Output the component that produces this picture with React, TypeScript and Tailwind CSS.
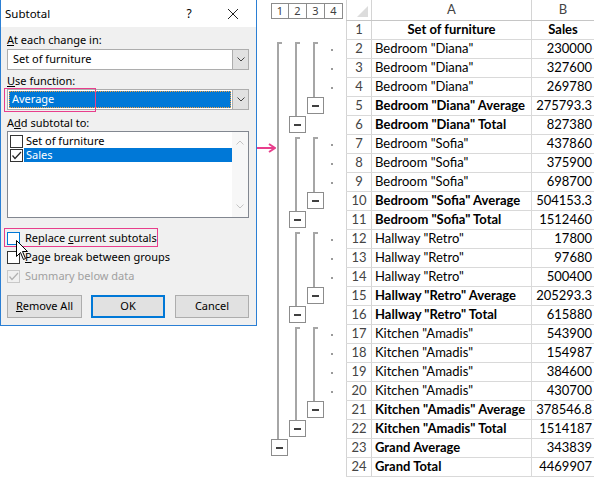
import React from "react";

const rows: { a: string; b: string; bold?: boolean; head?: boolean }[] = [
  { a: "Set of furniture", b: "Sales", head: true },
  { a: 'Bedroom "Diana"', b: "230000" },
  { a: 'Bedroom "Diana"', b: "327600" },
  { a: 'Bedroom "Diana"', b: "269780" },
  { a: 'Bedroom "Diana" Average', b: "275793.3", bold: true },
  { a: 'Bedroom "Diana" Total', b: "827380", bold: true },
  { a: 'Bedroom "Sofia"', b: "437860" },
  { a: 'Bedroom "Sofia"', b: "375900" },
  { a: 'Bedroom "Sofia"', b: "698700" },
  { a: 'Bedroom "Sofia" Average', b: "504153.3", bold: true },
  { a: 'Bedroom "Sofia" Total', b: "1512460", bold: true },
  { a: 'Hallway "Retro"', b: "17800" },
  { a: 'Hallway "Retro"', b: "97680" },
  { a: 'Hallway "Retro"', b: "500400" },
  { a: 'Hallway "Retro" Average', b: "205293.3", bold: true },
  { a: 'Hallway "Retro" Total', b: "615880", bold: true },
  { a: 'Kitchen "Amadis"', b: "543900" },
  { a: 'Kitchen "Amadis"', b: "154987" },
  { a: 'Kitchen "Amadis"', b: "384600" },
  { a: 'Kitchen "Amadis"', b: "430700" },
  { a: 'Kitchen "Amadis" Average', b: "378546.8", bold: true },
  { a: 'Kitchen "Amadis" Total', b: "1514187", bold: true },
  { a: "Grand Average", b: "343839", bold: true },
  { a: "Grand Total", b: "4469907", bold: true },
];

// outline gutter per row: level 2, level 3, level 4, detail dot
// s = bracket start, l = line, b = minus button
const outline = [
  "    ", "sss.", "lll.", "lll.", "llb ", "lb  ",
  "lss.", "lll.", "lll.", "llb ", "lb  ",
  "lss.", "lll.", "lll.", "llb ", "lb  ",
  "lss.", "lll.", "lll.", "lll.", "llb ", "lb  ",
  "b   ", "    ",
];

const Chevron = ({ up = false, color = "#444" }: { up?: boolean; color?: string }) => (
  <svg width="8" height="5" viewBox="0 0 8 5">
    <polyline
      points={up ? "0.5,4.5 4,1 7.5,4.5" : "0.5,0.5 4,4 7.5,0.5"}
      fill="none"
      stroke={color}
      strokeWidth="1"
    />
  </svg>
);

const Check = ({ color = "#222" }: { color?: string }) => (
  <svg width="11" height="11" viewBox="0 0 11 11">
    <polyline points="1.5,5.5 4,8.5 10,2" fill="none" stroke={color} strokeWidth="1.2" />
  </svg>
);

const Box = ({ checked, border = "#333", mark = "#222", bg = "#fff" }: { checked?: boolean; border?: string; mark?: string; bg?: string }) => (
  <div
    className="w-[13px] h-[13px] border flex items-center justify-center shrink-0"
    style={{ borderColor: border, background: bg }}
  >
    {checked && <Check color={mark} />}
  </div>
);

function Combo({ text, selected }: { text: string; selected?: boolean }) {
  return (
    <div className="flex h-[21px] border border-[#adadad] bg-white">
      <div className="flex-1 flex items-center p-px">
        {selected ? (
          <div className="w-full h-full bg-[#0078d7] border border-dotted border-[#f0a040] text-white flex items-center pl-[2px]">
            {text}
          </div>
        ) : (
          <span className="pl-[4px]">{text}</span>
        )}
      </div>
      <div className="w-[16px] bg-[#e1e1e1] border-l border-[#adadad] flex items-center justify-center">
        <Chevron />
      </div>
    </div>
  );
}

function Dialog() {
  return (
    <div
      className="relative w-[257px] h-[326px] shrink-0 border-x border-b border-[#2b7fd4] bg-[#f0f0f0] flex flex-col text-[11px] text-black"
      style={{ fontFamily: '"Noto Sans", sans-serif' }}
    >
      <div className="h-[27px] bg-white flex items-center pl-[4px]">
        <span className="flex-1 text-[11.5px]">Subtotal</span>
        <span className="w-[14px] text-center text-[12px]">?</span>
        <svg width="10" height="10" viewBox="0 0 10 10" className="ml-[32px] mr-[18px]">
          <path d="M0 0 L10 10 M10 0 L0 10" stroke="#222" strokeWidth="1" />
        </svg>
      </div>

      <div className="flex flex-col pl-[6px] pr-[7px] pt-[5px]">
        <div className="h-[16px] leading-[16px]">
          <span className="underline">A</span>t each change in:
        </div>
        <div className="mt-px">
          <Combo text="Set of furniture" />
        </div>

        <div className="h-[16px] leading-[16px] mt-[3px]">
          <span className="underline">U</span>se function:
        </div>
        <div className="relative">
          <Combo text="Average" selected />
          <div className="absolute left-[-3px] top-[-1px] w-[92px] h-[24px] border border-[#e83e8c]" />
        </div>

        <div className="h-[16px] leading-[16px] mt-[5px]">
          A<span className="underline">d</span>d subtotal to:
        </div>
        <div className="h-[87px] border border-[#828790] bg-white flex">
          <div className="flex-1 flex flex-col pt-[2px] pl-[2px]">
            <div className="h-[14px] flex items-center">
              <Box />
              <span className="pl-[3px]">Set of furniture</span>
            </div>
            <div className="h-[14px] flex items-center">
              <Box checked />
              <span className="flex-1 h-[14px] ml-px bg-[#0078d7] text-white pl-[2px] leading-[14px]">Sales</span>
            </div>
          </div>
          <div className="w-[16px] bg-[#f7f7f7] flex flex-col items-center justify-between py-[8px]">
            <Chevron up color="#c4c4c4" />
            <Chevron color="#c4c4c4" />
          </div>
        </div>

        <div className="relative mt-[11px] h-[19px] flex items-center">
          <Box border="#0078d7" />
          <span className="pl-[5px]">
            Replace <span className="underline">c</span>urrent subtotals
          </span>
          <div className="absolute left-[-3px] top-[-1px] w-[154px] h-[19px] border border-[#e83e8c]" />
        </div>
        <div className="h-[19px] flex items-center">
          <Box />
          <span className="pl-[5px]">
            <span className="underline">P</span>age break between groups
          </span>
        </div>
        <div className="h-[19px] flex items-center text-[#a0a0a0]">
          <Box checked border="#c8c8c8" mark="#b0b0b0" bg="#f0f0f0" />
          <span className="pl-[5px]">Summary below data</span>
        </div>

        <div className="mt-[9px] flex h-[23px]">
          <div className="w-[75px] border border-[#adadad] bg-[#e1e1e1] flex items-center justify-center">
            <span>
              <span className="underline">R</span>emove All
            </span>
          </div>
          <div className="ml-[9px] w-[74px] border-2 border-[#0078d7] bg-[#e1e1e1] flex items-center justify-center">
            OK
          </div>
          <div className="ml-[10px] w-[74px] border border-[#adadad] bg-[#e1e1e1] flex items-center justify-center">
            Cancel
          </div>
        </div>
      </div>

      <svg width="13" height="21" viewBox="0 0 13 21" className="absolute left-[15px] top-[240px]">
        <path d="M0.5 0.5 L0.5 16.5 L4.5 12.5 L7.5 19.5 L9.5 18.5 L6.5 11.5 L11.5 11.5 Z" fill="#fff" stroke="#000" strokeWidth="1" />
      </svg>
    </div>
  );
}

function GutterCell({ kind }: { kind: string }) {
  if (kind === "s")
    return (
      <div className="w-[18px] h-full flex">
        <div className="ml-[6px] mt-[2px] w-[5px] border-l-2 border-t-2 border-[#a6a6a6]" />
      </div>
    );
  if (kind === "l")
    return (
      <div className="w-[18px] h-full flex">
        <div className="ml-[6px] w-[2px] bg-[#a6a6a6]" />
      </div>
    );
  if (kind === "b")
    return (
      <div className="w-[18px] h-full">
        <div className="w-[17px] h-[17px] border border-[#8c8c8c] bg-white flex items-center justify-center">
          <div className="w-[7px] h-[2px] bg-[#404040]" />
        </div>
      </div>
    );
  return <div className="w-[18px] h-full" />;
}

function Gutter() {
  return (
    <div className="w-[75px] shrink-0 flex flex-col" style={{ fontFamily: '"Noto Sans", sans-serif' }}>
      <div className="h-[21px] flex pt-[3px]">
        {["1", "2", "3", "4"].map((n, i) => (
          <div
            key={n}
            className={`w-[18px] h-[16px] border-y border-r border-[#8c8c8c] bg-white text-[11px] text-[#404040] flex items-center justify-center ${i === 0 ? "border-l" : ""}`}
          >
            {n}
          </div>
        ))}
      </div>
      {outline.map((o, i) => (
        <div key={i} className="h-[19px] flex">
          <GutterCell kind={o[0]} />
          <GutterCell kind={o[1]} />
          <GutterCell kind={o[2]} />
          <div className="w-[21px] flex items-center">
            {o[3] === "." && <div className="ml-[6px] w-[2px] h-[2px] bg-[#9a9a9a]" />}
          </div>
        </div>
      ))}
    </div>
  );
}

function Sheet() {
  return (
    <div className="flex-1 flex flex-col text-[13px]" style={{ fontFamily: "Lato, sans-serif" }}>
      <div className="h-[21px] flex border-b border-[#c6c6c6]">
        <div className="w-[26px] border-x border-[#d4d4d4] flex items-end justify-end pr-[3px] pb-[3px]">
          <svg width="11" height="11" viewBox="0 0 11 11">
            <polygon points="11,0 11,11 0,11" fill="#dcdcdc" />
          </svg>
        </div>
        <div className="w-[160px] border-r border-[#d4d4d4] flex items-center justify-center text-[#444]">A</div>
        <div className="flex-1 flex items-center justify-center text-[#444]">B</div>
      </div>
      {rows.map((r, i) => (
        <div key={i} className="h-[19px] flex border-b border-[#d9d9d9]">
          <div className="w-[26px] border-x border-[#d4d4d4] flex items-center justify-center text-[#444]">{i + 1}</div>
          <div
            className={`w-[160px] border-r border-[#d9d9d9] flex items-center whitespace-nowrap ${r.head ? "justify-center font-bold" : "pl-[3px]"} ${r.bold ? "font-bold" : ""}`}
          >
            {r.a}
          </div>
          <div className={`flex-1 flex items-center ${r.head ? "justify-center font-bold" : "justify-end pr-[2px]"}`}>
            {r.b}
          </div>
        </div>
      ))}
    </div>
  );
}

export default function App() {
  return (
    <div className="relative w-[594px] h-[478px] bg-white flex overflow-hidden">
      <Dialog />
      <div className="w-[14px] shrink-0" />
      <Gutter />
      <Sheet />
      <svg width="19" height="10" viewBox="0 0 19 10" className="absolute left-[257px] top-[143px]">
        <path d="M0 5 L17 5" stroke="#e83e8c" strokeWidth="2" />
        <path d="M12 1 L18 5 L12 9" fill="none" stroke="#e83e8c" strokeWidth="2" />
      </svg>
    </div>
  );
}
